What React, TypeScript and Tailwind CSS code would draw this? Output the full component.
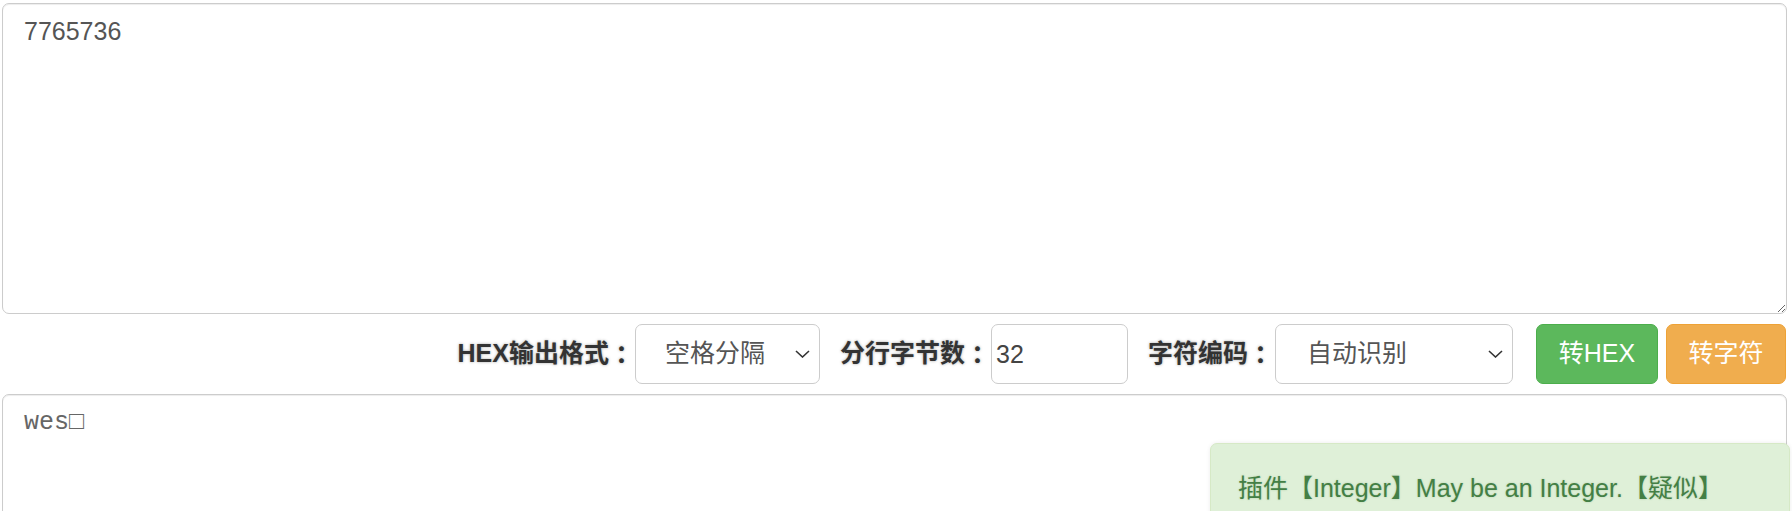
const sans = "font-['Liberation_Sans','Noto_Sans_CJK_SC',sans-serif]";

function Label({ text }: { text: string }) {
  return (
    <span className="flex items-center font-bold text-[25px] text-[#333] [text-shadow:0_0_3px_rgba(0,0,0,0.35)]">
      {text}
      <span className="w-[25px] text-center font-['Noto_Sans_CJK_JP',sans-serif]">：</span>
    </span>
  );
}

function Chevron() {
  return (
    <svg width="15" height="8" viewBox="0 0 15 8" fill="none">
      <polyline points="1,1 7.5,7 14,1" stroke="#333" strokeWidth="1.6" />
    </svg>
  );
}

function FakeSelect({ value, width, padLeft }: { value: string; width: string; padLeft: string }) {
  return (
    <div
      className={`flex h-[60px] items-center justify-between rounded-[7px] border border-[#ccc] bg-white pr-[9px] text-[25px] text-[#555] ${width} ${padLeft}`}
    >
      <span>{value}</span>
      <Chevron />
    </div>
  );
}

export default function App() {
  return (
    <div className={`relative h-[511px] w-[1792px] overflow-hidden bg-white pl-[2px] pr-[5px] pt-[3px] ${sans}`}>
      <textarea
        defaultValue="7765736"
        className="block h-[311px] w-full resize-y rounded-[7px] border border-[#ccc] px-[21px] py-[10px] text-[25px] leading-[1.43] text-[#555] shadow-[inset_0_1px_1px_rgba(0,0,0,0.075)] outline-none"
      />

      <div className="mt-[10px] flex h-[60px] items-center justify-end pr-[1px]">
        <Label text="HEX输出格式" />
        <div className="ml-[1px]">
          <FakeSelect value="空格分隔" width="w-[185px]" padLeft="pl-[29px]" />
        </div>

        <div className="ml-[20px]">
          <Label text="分行字节数" />
        </div>
        <input
          defaultValue="32"
          className="ml-[1px] h-[60px] w-[137px] rounded-[7px] border border-[#ccc] pl-[4px] text-[25px] text-[#444] outline-none"
        />

        <div className="ml-[20px]">
          <Label text="字符编码" />
        </div>
        <div className="ml-[2px]">
          <FakeSelect value="自动识别" width="w-[238px]" padLeft="pl-[31px]" />
        </div>

        <button className="ml-[23px] h-[60px] w-[122px] rounded-[7px] border border-[#4cae4c] bg-[#5cb85c] text-[25px] text-white">
          转HEX
        </button>
        <button className="ml-[8px] h-[60px] w-[120px] rounded-[7px] border border-[#eea236] bg-[#f0ad4e] text-[25px] text-white">
          转字符
        </button>
      </div>

      <textarea
        defaultValue={"wes\u25A1"}
        className="mt-[10px] block h-[311px] w-full resize-y rounded-[7px] border border-[#ccc] px-[21px] py-[10px] font-['Liberation_Mono','DejaVu_Sans_Mono',monospace] text-[25px] leading-[1.43] text-[#666] shadow-[inset_0_1px_1px_rgba(0,0,0,0.075)] outline-none"
      />

      <div className="absolute left-[1210px] right-[2px] top-[443px] h-[200px] rounded-[7px] border border-[#d6e9c6] bg-[#dff0d8] px-[27px] py-[27px] text-[25px] leading-[1.43] text-[#447f45] shadow-[0_0_4px_rgba(0,0,0,0.08)] [text-shadow:0_0_2px_rgba(60,118,61,0.3)]">
        插件【Integer】May be an Integer.【疑似】
      </div>
    </div>
  );
}
